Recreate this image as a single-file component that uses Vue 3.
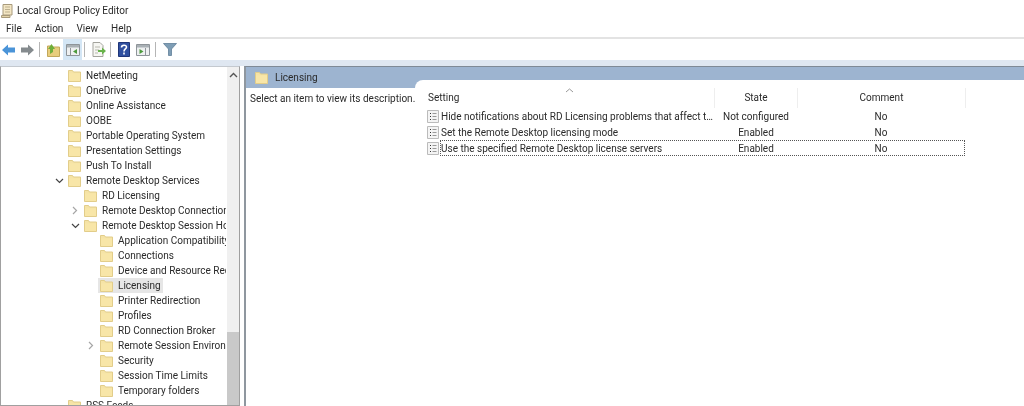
<script setup>
const rows = [
  { t: 'NetMeeting', l: 0 },
  { t: 'OneDrive', l: 0 },
  { t: 'Online Assistance', l: 0 },
  { t: 'OOBE', l: 0 },
  { t: 'Portable Operating System', l: 0 },
  { t: 'Presentation Settings', l: 0 },
  { t: 'Push To Install', l: 0 },
  { t: 'Remote Desktop Services', l: 0, e: 'open' },
  { t: 'RD Licensing', l: 1 },
  { t: 'Remote Desktop Connection Client', l: 1, e: 'closed' },
  { t: 'Remote Desktop Session Host', l: 1, e: 'open' },
  { t: 'Application Compatibility', l: 2 },
  { t: 'Connections', l: 2 },
  { t: 'Device and Resource Redirection', l: 2 },
  { t: 'Licensing', l: 2, sel: true },
  { t: 'Printer Redirection', l: 2 },
  { t: 'Profiles', l: 2 },
  { t: 'RD Connection Broker', l: 2 },
  { t: 'Remote Session Environment', l: 2, e: 'closed' },
  { t: 'Security', l: 2 },
  { t: 'Session Time Limits', l: 2 },
  { t: 'Temporary folders', l: 2 },
  { t: 'RSS Feeds', l: 0 },
]
const policies = [
  { n: 'Hide notifications about RD Licensing problems that affect the RD Session Host server', s: 'Not configured', c: 'No' },
  { n: 'Set the Remote Desktop licensing mode', s: 'Enabled', c: 'No' },
  { n: 'Use the specified Remote Desktop license servers', s: 'Enabled', c: 'No', focus: true },
]
const indent = l => ({ paddingLeft: `${52 + l * 16}px` })
</script>

<template>
  <div class="app">
    <div class="title">
      <svg class="appicon" width="12" height="15" viewBox="0 0 12 15"><path d="M2 1.500h9v10.500H2z" fill="#f3e6c4" stroke="#a89a7c"/><path d="M.5 12.500h8.500v2H.5z" fill="#e3d3a8" stroke="#a89a7c"/><path d="M4 4h5M4 6.500h5M4 9h5" stroke="#bdb08f"/></svg>
      <span>Local Group Policy Editor</span>
    </div>
    <div class="menu"><span>File</span><span>Action</span><span>View</span><span>Help</span></div>
    <div class="toolbar">
      <svg class="tb back" width="13" height="12" viewBox="0 0 13 12"><path d="M0 6l6-5.500v3h7v5H6v3z" fill="#4a94d8"/></svg>
      <svg class="tb" width="13" height="12" viewBox="0 0 13 12"><path d="M13 6L7 .5v3H0v5h7v3z" fill="#858b8e"/></svg>
      <i class="sep s5"></i>
      <svg class="tb up" width="13" height="14" viewBox="0 0 13 14"><path d="M.5 13.500V3h4l1 1h7v9.500z" fill="#e8cd7c" stroke="#c2a75a"/><path d="M3 11V6H1l3.500-5L8 6H6v3z" fill="#6fae3a"/></svg>
      <span class="tbon"><svg width="14" height="12" viewBox="0 0 14 12"><path d="M.5.5h13v11H.5z" fill="#eef0f1" stroke="#8e9499"/><path d="M1 1h12v2.500H1z" fill="#a9b0b5"/><path d="M4.500 4v7" stroke="#8e9499"/><path d="M11 5v5L7 7.500z" fill="#4c9a3c"/></svg></span>
      <i class="sep s2"></i>
      <svg class="tb" width="14" height="15" viewBox="0 0 14 15"><path d="M1 .5h7l3 3v11H1z" fill="#f6f6f2" stroke="#a3a39c"/><path d="M3 5h5M3 8h4M3 11h3" stroke="#b8b8ae"/><path d="M6 8h4V5.500L14 9l-4 3.500V10H6z" fill="#68b34a"/></svg>
      <i class="sep s4"></i>
      <svg class="tb help" width="12" height="15" viewBox="0 0 12 15"><path d="M.5.500h11v14H.5z" fill="#2f4f9f" stroke="#1f3578"/><path d="M3.500 5.500c0-3 5-3 5-.5 0 2-2.500 2-2.500 4.500M6 10.500v2" fill="none" stroke="#fff" stroke-width="1.600"/></svg>
      <svg class="tb" width="14" height="12" viewBox="0 0 14 12"><path d="M.5.5h13v11H.5z" fill="#eef0f1" stroke="#8e9499"/><path d="M1 1h12v2.500H1z" fill="#a9b0b5"/><path d="M9.500 4v7" stroke="#8e9499"/><path d="M3.500 5v5l4-2.500z" fill="#4c9a3c"/></svg>
      <i class="sep s5"></i>
      <svg class="tb" width="14" height="13" viewBox="0 0 14 13"><path d="M.5.5h13L8.500 6v6.500h-3V6z" fill="#7e9db5" stroke="#5f7f98" stroke-width=".8"/></svg>
    </div>
    <div class="strip"></div>
    <div class="panes">
      <div class="treepane">
        <div class="tree">
          <div v-for="r in rows" :key="r.t" class="row" :style="indent(r.l)">
            <span class="exp">
              <svg v-if="r.e === 'open'" width="9" height="6" viewBox="0 0 9 6"><path d="M1 1l3.500 3.500L8 1" fill="none" stroke="#444" stroke-width="1.200"/></svg>
              <svg v-else-if="r.e === 'closed'" width="6" height="9" viewBox="0 0 6 9"><path d="M1 1l3.500 3.500L1 8" fill="none" stroke="#a6a6a6" stroke-width="1.200"/></svg>
            </span>
            <span class="cell" :class="{ sel: r.sel }">
              <svg class="folder" width="13" height="12" viewBox="0 0 13 12"><path d="M.5 11.500V.5h4l1 1.500h7v9.500z" fill="#f5e3a6" stroke="#e2cd8a"/><path d="M1 3.500h11V11H1z" fill="#f8e6a8"/></svg>
              <span class="label">{{ r.t }}</span>
            </span>
          </div>
        </div>
        <div class="scroll">
          <svg class="up-arrow" width="9" height="6" viewBox="0 0 9 6"><path d="M1 5l3.500-3.500L8 5" fill="none" stroke="#555" stroke-width="1.400"/></svg>
          <div class="thumb"></div>
        </div>
      </div>
      <div class="right">
        <div class="rhead">
          <svg class="folder" width="13" height="12" viewBox="0 0 13 12"><path d="M.5 11.500V.5h4l1 1.500h7v9.500z" fill="#f5e3a6" stroke="#e2cd8a"/><path d="M1 3.500h11V11H1z" fill="#f8e6a8"/></svg>
          <span>Licensing</span>
        </div>
        <div class="rbody">
          <div class="desc">Select an item to view its description.</div>
          <div class="tab">
            <div class="thead">
              <span class="c1">Setting<svg class="sort" width="9" height="5" viewBox="0 0 9 5"><path d="M1 4l3.500-3L8 4" fill="none" stroke="#999"/></svg></span>
              <span class="c2">State</span>
              <span class="c3">Comment</span>
            </div>
            <div v-for="p in policies" :key="p.n" class="prow">
              <svg class="pi" width="13" height="13" viewBox="0 0 13 13"><path d="M.5.5h11v12H.5z" fill="#f4f4f4" stroke="#bbb"/><path d="M3 3.500h1M3 6.500h1M3 9.500h1" stroke="#333"/><path d="M5.500 3.500h4M5.500 6.500h4M5.500 9.500h4" stroke="#999"/></svg>
              <div class="pcells" :class="{ focus: p.focus }">
                <span class="c1t">{{ p.n }}</span>
                <span class="c2t">{{ p.s }}</span>
                <span class="c3t">{{ p.c }}</span>
              </div>
            </div>
          </div>
        </div>
      </div>
    </div>
  </div>
</template>

<style>
html, body { margin: 0; background: #fff; }
</style>

<style scoped>
.app { width: 1024px; height: 406px; display: flex; flex-direction: column; overflow: hidden; font-family: Roboto, sans-serif; font-size: 10px; color: #2a2a2a; background: #fff; filter: blur(.4px); }
.title { height: 20px; display: flex; align-items: center; gap: 4px; }
.appicon { margin-left: 1px; }
.menu { height: 17px; display: flex; align-items: center; gap: 13px; padding-left: 6px; border-bottom: 2px solid #e3e3e3; }
.toolbar { height: 21px; display: flex; align-items: center; padding-left: 2px; }
.tb { flex: none; }
.back { margin-right: 6px; }
.up { margin-right: 3px; }
.help { margin-right: 6px; }
.tbon { width: 19px; height: 21px; background: #d4e6f5; display: flex; align-items: center; justify-content: center; }
.sep { width: 1px; height: 15px; background: #b5b5b5; margin-right: 7px; }
.s2 { margin-left: 2px; }
.s4 { margin-left: 4px; }
.s5 { margin-left: 5px; }
.strip { height: 6px; background: #dfe7f1; }
.panes { flex: 1; display: flex; min-height: 0; }
.treepane { width: 240px; flex: none; display: flex; border: 1px solid #a0a0a0; border-top-color: #c4c9cf; box-sizing: border-box; overflow: hidden; }
.tree { flex: 1; min-width: 0; overflow: hidden; white-space: nowrap; padding-top: 1px; }
.row { height: 15px; display: flex; align-items: center; }
.exp { width: 15px; flex: none; display: flex; justify-content: center; padding-right: 3px; box-sizing: border-box; }
.cell { display: flex; align-items: center; gap: 5px; height: 15px; padding: 0 2px 0 2px; margin-left: -2px; }
.cell.sel { background: #e6e6e6; }
.folder { flex: none; }
.scroll { width: 12px; flex: none; background: #f0f0f0; position: relative; margin-left: 1px; }
.up-arrow { position: absolute; left: 2px; top: 5px; }
.thumb { position: absolute; left: 0; right: 0; bottom: 0; height: 73px; background: #c9c9c9; }
.right { flex: 1; margin-left: 4px; border-left: 2px solid #8f979f; border-top: 1px solid #7f8a96; display: flex; flex-direction: column; min-width: 0; }
.rhead { height: 21px; flex: none; background: #9db4d0; display: flex; align-items: center; gap: 7px; padding-left: 9px; box-sizing: border-box; }
.rbody { flex: 1; display: flex; background: #9db4d0; position: relative; }
.desc { position: absolute; left: 0; right: 0; top: 0; bottom: 0; background: #fff; padding: 5px 0 0 4px; }
.tab { position: absolute; left: 169px; top: -8px; right: 0; bottom: 0; background: #fff; border-top-left-radius: 8px; }
.thead { display: flex; height: 28px; box-sizing: border-box; padding-top: 8px; line-height: 20px; }
.c1 { width: 300px; padding-left: 13px; box-sizing: border-box; position: relative; border-right: 1px solid #eee; }
.sort { position: absolute; left: 150px; top: 0; }
.c2 { width: 82px; text-align: center; border-right: 1px solid #eee; }
.c3 { width: 168px; text-align: center; border-right: 1px solid #eee; box-sizing: border-box; }
.prow { height: 16px; display: flex; align-items: center; padding-left: 12px; }
.pi { flex: none; }
.pcells { display: flex; height: 16px; align-items: center; box-sizing: border-box; border: 1px solid transparent; width: 525px; }
.pcells.focus { border: 1px dotted #555; }
.c1t { width: 273px; white-space: nowrap; overflow: hidden; text-overflow: ellipsis; flex: none; }
.c2t { width: 84px; text-align: center; flex: none; }
.c3t { flex: 1; text-align: center; }
</style>
